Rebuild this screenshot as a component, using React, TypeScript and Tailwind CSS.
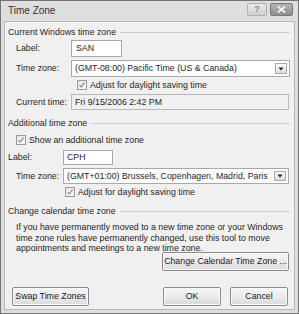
import React from "react";

function Check() {
  return (
    <span className="inline-flex w-[10px] h-[10px] border border-[#9a9a9a] bg-gradient-to-br from-[#e6e6e6] to-[#fafafa] items-center justify-center shrink-0">
      <svg width="8" height="8" viewBox="0 0 8 8">
        <path d="M1.5 4.2 L3.2 6 L6.6 1.5" stroke="#9c9c9c" strokeWidth="1.4" fill="none" />
      </svg>
    </span>
  );
}

function DropBtn() {
  return (
    <span className="absolute right-[2px] top-[2px] bottom-[2px] w-[12px] border border-[#a8a8a8] bg-gradient-to-b from-[#fbfbfb] to-[#dedede] flex items-center justify-center">
      <svg width="6" height="4" viewBox="0 0 6 4">
        <path d="M0.5 0.5 L5.5 0.5 L3 3.5 Z" fill="#222" />
      </svg>
    </span>
  );
}

function GroupHeader({ text }: { text: string }) {
  return (
    <div className="flex items-center h-[14px] pl-[3px] pr-[4px] whitespace-nowrap">
      <span>{text}</span>
      <span className="flex-1 ml-[4px] border-t border-[#cfcfcf]" />
    </div>
  );
}

function Btn({ children, w }: { children: React.ReactNode; w: string }) {
  return (
    <div
      className={`${w} h-[19px] border border-[#8a8a8a] rounded-[2px] bg-gradient-to-b from-[#f6f6f6] via-[#ebebeb] to-[#dadada] flex items-center justify-center text-[#222] whitespace-nowrap shadow-[inset_0_0_0_1px_#fbfbfb]`}
    >
      {children}
    </div>
  );
}

export default function App() {
  return (
    <div className="w-[299px] h-[314px] bg-[#757575] p-[1px] font-['Liberation_Sans','Arial',sans-serif] text-[8.8px] leading-none text-[#262626]">
      <div className="w-full h-full bg-[#dedede] flex flex-col px-[3px] pb-[3px]">
        <div className="h-[20px] flex items-center pl-[4px] pr-[2px] shrink-0">
          <span className="text-[10px] text-[#333]">Time Zone</span>
          <div className="ml-auto flex gap-[3px] mt-[-4px]">
            <div className="w-[20px] h-[13px] border border-[#b0b0b0] rounded-[2px] bg-gradient-to-b from-[#e8e8e8] to-[#cfcfcf] flex items-center justify-center text-[9px] text-[#8a8a8a] font-bold">
              ?
            </div>
            <div className="w-[23px] h-[13px] border border-[#7a7a7a] rounded-[2px] bg-gradient-to-b from-[#b5b5b5] to-[#8f8f8f] flex items-center justify-center">
              <svg width="9" height="7" viewBox="0 0 9 7">
                <path d="M1 0.5 L8 6.5 M8 0.5 L1 6.5" stroke="#f4f4f4" strokeWidth="1.8" />
              </svg>
            </div>
          </div>
        </div>
        <div className="flex-1 bg-[#f0f0f0] border border-[#b8b8b8] flex flex-col pt-[3px] whitespace-nowrap">
          <GroupHeader text="Current Windows time zone" />
          <div className="flex items-center mt-[1px] h-[17px]">
            <span className="w-[66px] pl-[11px]">Label:</span>
            <div className="w-[51px] h-[17px] border border-[#a9a9a9] bg-white flex items-center pl-[4px]">SAN</div>
          </div>
          <div className="flex items-center mt-[3px] h-[17px]">
            <span className="w-[66px] pl-[11px]">Time zone:</span>
            <div className="relative w-[219px] h-[17px] border border-[#a9a9a9] bg-white flex items-center pl-[3px]">
              (GMT-08:00) Pacific Time (US &amp; Canada)
              <DropBtn />
            </div>
          </div>
          <div className="flex items-center mt-[2px] h-[12px] pl-[72px] gap-[3px]">
            <Check />
            <span>Adjust for daylight saving time</span>
          </div>
          <div className="flex items-center mt-[3px] h-[16px]">
            <span className="w-[66px] pl-[11px]">Current time:</span>
            <div className="w-[218px] h-[16px] border border-[#b9b9b9] bg-[#f0f0f0] flex items-center pl-[3px]">
              Fri 9/15/2006 2:42 PM
            </div>
          </div>
          <div className="mt-[6px]">
            <GroupHeader text="Additional time zone" />
          </div>
          <div className="flex items-center mt-[4px] h-[12px] pl-[11px] gap-[3px]">
            <Check />
            <span>Show an additional time zone</span>
          </div>
          <div className="flex items-center mt-[4px] h-[15px]">
            <span className="w-[58px] pl-[3px]">Label:</span>
            <div className="w-[50px] h-[15px] border border-[#a9a9a9] bg-white flex items-center pl-[3px]">CPH</div>
          </div>
          <div className="flex items-center mt-[3px] h-[16px]">
            <span className="w-[58px] pl-[11px]">Time zone:</span>
            <div className="relative w-[226px] h-[16px] border border-[#a9a9a9] bg-white flex items-center pl-[3px]">
              (GMT+01:00) Brussels, Copenhagen, Madrid, Paris
              <DropBtn />
            </div>
          </div>
          <div className="flex items-center mt-[2px] h-[12px] pl-[60px] gap-[3px]">
            <Check />
            <span>Adjust for daylight saving time</span>
          </div>
          <div className="mt-[6px]">
            <GroupHeader text="Change calendar time zone" />
          </div>
          <p className="mt-[4px] h-[29px] pl-[11px] pr-[4px] leading-[10.5px]">
            If you have permanently moved to a new time zone or your Windows
            <br />
            time zone rules have permanently changed, use this tool to move
            <br />
            appointments and meetings to a new time zone.
          </p>
          <div className="flex justify-end pr-[5px] mt-[1px]">
            <Btn w="w-[127px]">Change Calendar Time Zone ...</Btn>
          </div>
          <div className="flex items-center mt-auto mb-[3px] pl-[7px] pr-[6px]">
            <Btn w="w-[77px]">Swap Time Zones</Btn>
            <div className="ml-auto flex gap-[9px]">
              <Btn w="w-[58px]">OK</Btn>
              <Btn w="w-[58px]">Cancel</Btn>
            </div>
          </div>
        </div>
      </div>
    </div>
  );
}
